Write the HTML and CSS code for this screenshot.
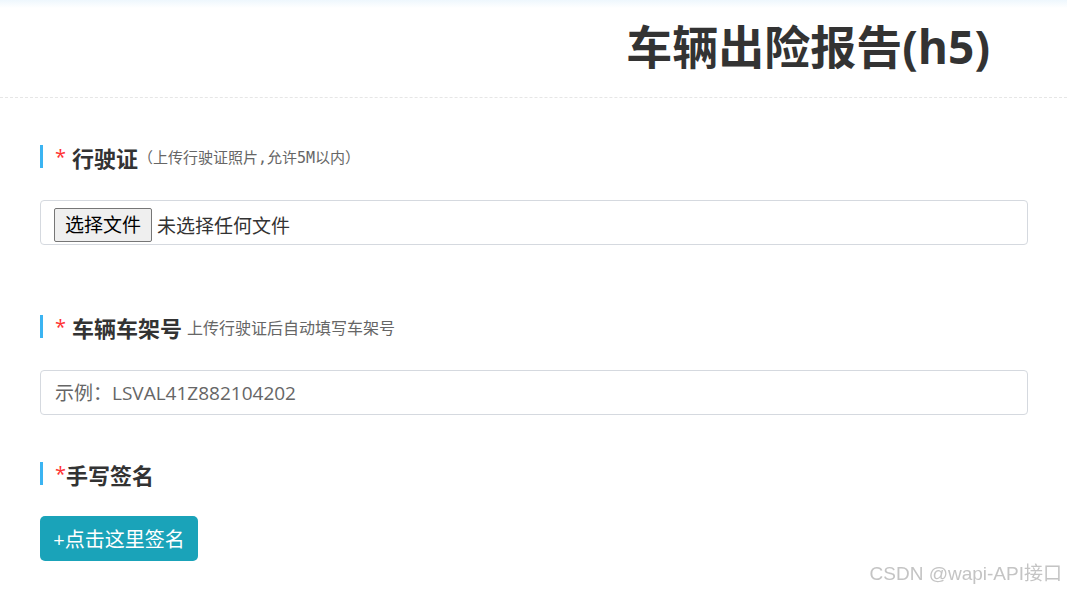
FILE: index.html
```html
<!DOCTYPE html>
<html lang="zh-CN">
<head>
    <meta charset="UTF-8">
    <meta name="viewport" content="width=device-width, initial-scale=1.0">
    <title>车辆出险报告</title>
    <link rel="stylesheet" href="styles.css">
</head>
<body>
    <div class="topbar"></div>
    <header class="header">
        <h1 class="title">车辆出险报告(h5)</h1>
    </header>

    <form class="form">
        <div class="field first">
            <div class="label">
                <span class="req">*</span>
                <b>行驶证</b>
                <span class="hint mono">（上传行驶证照片,允许5M以内）</span>
            </div>
            <div class="input file-input">
                <span class="file-btn">选择文件</span>
                <span class="file-name">未选择任何文件</span>
            </div>
        </div>

        <div class="field second">
            <div class="label">
                <span class="req">*</span>
                <b>车辆车架号</b>
                <span class="hint">上传行驶证后自动填写车架号</span>
            </div>
            <input class="input text-input" type="text" placeholder="示例：LSVAL41Z882104202">
        </div>

        <div class="field">
            <div class="label tight">
                <span class="req">*</span><b>手写签名</b>
            </div>
            <button type="button" class="sign-btn">+点击这里签名</button>
        </div>
    </form>

    <div class="watermark">CSDN @wapi-API接口</div>
</body>
</html>
```

FILE: styles.css
```css
body {
    margin: 0;
    font-family: "Open Sans", "Noto Sans CJK SC", sans-serif;
    color: #333;
    background: #fff;
    overflow: hidden;
}

.topbar {
    height: 8px;
    background: linear-gradient(#eef7fd, #fff);
}

.header {
    height: 89px;
    border-bottom: 1px dashed #e6e6e6;
    display: flex;
    justify-content: flex-end;
    padding-right: 77px;
}

.header .title {
    margin: 0;
    font-size: 46px;
    font-weight: bold;
    line-height: 76px;
    color: #333;
}

.form {
    padding: 47px 39px 0 40px;
}

.field.first {
    margin-bottom: 70px;
}
.field.second {
    margin-bottom: 47px;
}

.label {
    display: flex;
    align-items: center;
    height: 23px;
    border-left: 3px solid #3bb4f2;
    padding-left: 12px;
    margin-bottom: 32px;
}
.label.tight {
    margin-bottom: 31px;
}
.label b {
    font-size: 22px;
    margin-left: 6px;
}
.label.tight b {
    margin-left: 0;
}
.label .req {
    color: #f33;
    font-size: 20px;
    line-height: 23px;
}
.label .hint {
    font-size: 16px;
    color: #666;
    margin-left: 5px;
}
.label .hint.mono {
    font-family: "DejaVu Sans Mono", "Noto Sans CJK SC", monospace;
    font-size: 15px;
    margin-left: 0;
}

.input {
    box-sizing: border-box;
    width: 100%;
    height: 45px;
    border: 1px solid #d5d9df;
    border-radius: 4px;
    background: #fff;
}

.file-input {
    display: flex;
    align-items: center;
    padding-left: 13px;
    padding-top: 4px;
}
.file-btn {
    font-size: 19px;
    color: #000;
    background: #efefef;
    border: 1px solid #767676;
    border-radius: 2px;
    padding: 2px 10px;
    line-height: 28px;
}
.file-name {
    font-size: 19px;
    color: #333;
    margin-left: 5px;
}

.text-input {
    padding: 0 14px;
    font-size: 19px;
    font-family: "Open Sans", "Noto Sans CJK SC", sans-serif;
    color: #333;
    outline: none;
}
.text-input::placeholder {
    color: #666;
}

.sign-btn {
    width: 158px;
    height: 45px;
    border: none;
    border-radius: 5px;
    background: #1aa3b9;
    color: #fff;
    font-size: 20px;
    font-family: "Open Sans", "Noto Sans CJK SC", sans-serif;
    padding: 0;
}

.watermark {
    position: fixed;
    right: 5px;
    bottom: 6px;
    font-family: "Liberation Sans", "Noto Sans CJK SC", sans-serif;
    font-size: 19px;
    color: #c4c4c4;
}
```
